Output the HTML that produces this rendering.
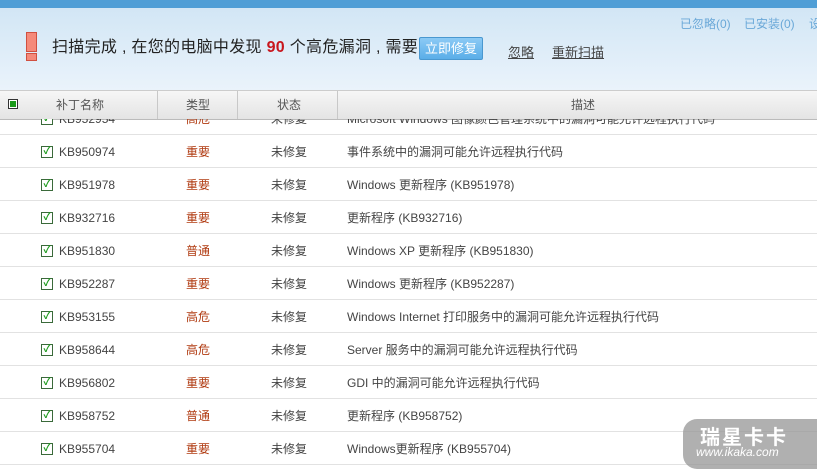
<html><head><style>
body{margin:0;width:817px;height:469px;overflow:hidden;background:#fff;font-family:"Liberation Sans","Noto Sans CJK SC",sans-serif;position:relative}
.top{position:absolute;left:0;top:0;width:817px;height:8px;background:#4f9ed6}
.hd{position:absolute;left:0;top:8px;width:817px;height:82px;background:linear-gradient(#d2e6f5,#eaf3fb)}
.th{position:absolute;left:0;top:90px;width:817px;height:28px;background:linear-gradient(#f6f6f6,#e4e4e4);border-top:1px solid #ccc;border-bottom:1px solid #bbb;font-size:12px;color:#555}
.th span{position:absolute;top:0;line-height:28px}
.dv{position:absolute;top:0;width:1px;height:28px;background:#c8c8c8}
.row{position:absolute;left:0;width:817px;height:32px;border-bottom:1px solid #e2e2e2;font-size:12px;color:#444}
.row span{position:absolute;top:1px;line-height:32px;white-space:nowrap}
.cb{position:absolute;left:41px;top:11px;width:10px;height:10px;border:1px solid #3a6a3a;background:#fff;color:#1a9a1a;font-size:10px;line-height:10px;text-align:center;font-weight:bold}
.t{color:#b03a10}
</style></head><body>
<div class="top"></div>
<div class="hd">
<div style="position:absolute;left:26px;top:24px;width:9px;height:18px;background:#f58a7a;border:1px solid #d05040"></div>
<div style="position:absolute;left:26px;top:45px;width:9px;height:6px;background:#f58a7a;border:1px solid #d05040"></div>
<div style="position:absolute;left:52px;top:29px;font-size:16px;line-height:22px;color:#222;white-space:nowrap;letter-spacing:0.3px">扫描完成 , 在您的电脑中发现 <b style="color:#c8161d">90</b> 个高危漏洞 , 需要</div>
<div style="position:absolute;left:419px;top:29px;width:62px;height:21px;background:linear-gradient(#8ccaf5,#5aaee8);border:1px solid #4a98d0;border-radius:2px;color:#fff;font-size:13px;text-align:center;line-height:21px">立即修复</div>
<div style="position:absolute;left:508px;top:34px;font-size:13px;color:#444;text-decoration:underline">忽略</div>
<div style="position:absolute;left:552px;top:34px;font-size:13px;color:#444;text-decoration:underline">重新扫描</div>
<div style="position:absolute;left:680px;top:7px;font-size:12px;color:#6aa8d8">已忽略(0)</div>
<div style="position:absolute;left:744px;top:7px;font-size:12px;color:#6aa8d8">已安装(0)</div>
<div style="position:absolute;left:809px;top:7px;font-size:12px;color:#6aa8d8">设</div>
</div>
<div class="th">
<div style="position:absolute;left:8px;top:8px;width:8px;height:8px;border:1px solid #333;background:#1a9a1a;box-shadow:inset 0 0 0 1px #fff"></div>
<span style="left:56px">补丁名称</span><div class="dv" style="left:157px"></div>
<span style="left:186px">类型</span><div class="dv" style="left:237px"></div>
<span style="left:277px">状态</span><div class="dv" style="left:337px"></div>
<span style="left:571px">描述</span>
</div>
<div style="position:absolute;left:0;top:119px;width:817px;height:15px;overflow:hidden">
<div class="row" style="top:-17px"><div class="cb">✓</div><span style="left:59px">KB952954</span><span class="t" style="left:186px">高危</span><span style="left:271px">未修复</span><span style="left:347px">Microsoft Windows 图像颜色管理系统中的漏洞可能允许远程执行代码</span></div>
</div>
<div class="row" style="top:134px;border-top:1px solid #e2e2e2"><div class="cb">✓</div><span style="left:59px">KB950974</span><span class="t" style="left:186px">重要</span><span style="left:271px">未修复</span><span style="left:347px">事件系统中的漏洞可能允许远程执行代码</span></div>
<div class="row" style="top:168px"><div class="cb">✓</div><span style="left:59px">KB951978</span><span class="t" style="left:186px">重要</span><span style="left:271px">未修复</span><span style="left:347px">Windows 更新程序 (KB951978)</span></div>
<div class="row" style="top:201px"><div class="cb">✓</div><span style="left:59px">KB932716</span><span class="t" style="left:186px">重要</span><span style="left:271px">未修复</span><span style="left:347px">更新程序 (KB932716)</span></div>
<div class="row" style="top:234px"><div class="cb">✓</div><span style="left:59px">KB951830</span><span class="t" style="left:186px">普通</span><span style="left:271px">未修复</span><span style="left:347px">Windows XP 更新程序 (KB951830)</span></div>
<div class="row" style="top:267px"><div class="cb">✓</div><span style="left:59px">KB952287</span><span class="t" style="left:186px">重要</span><span style="left:271px">未修复</span><span style="left:347px">Windows 更新程序 (KB952287)</span></div>
<div class="row" style="top:300px"><div class="cb">✓</div><span style="left:59px">KB953155</span><span class="t" style="left:186px">高危</span><span style="left:271px">未修复</span><span style="left:347px">Windows Internet 打印服务中的漏洞可能允许远程执行代码</span></div>
<div class="row" style="top:333px"><div class="cb">✓</div><span style="left:59px">KB958644</span><span class="t" style="left:186px">高危</span><span style="left:271px">未修复</span><span style="left:347px">Server 服务中的漏洞可能允许远程执行代码</span></div>
<div class="row" style="top:366px"><div class="cb">✓</div><span style="left:59px">KB956802</span><span class="t" style="left:186px">重要</span><span style="left:271px">未修复</span><span style="left:347px">GDI 中的漏洞可能允许远程执行代码</span></div>
<div class="row" style="top:399px"><div class="cb">✓</div><span style="left:59px">KB958752</span><span class="t" style="left:186px">普通</span><span style="left:271px">未修复</span><span style="left:347px">更新程序 (KB958752)</span></div>
<div class="row" style="top:432px"><div class="cb">✓</div><span style="left:59px">KB955704</span><span class="t" style="left:186px">重要</span><span style="left:271px">未修复</span><span style="left:347px">Windows更新程序 (KB955704)</span></div>
<div style="position:absolute;left:683px;top:419px;width:150px;height:50px;background:rgba(150,150,150,0.75);border-radius:14px 0 0 14px"></div>
<div style="position:absolute;left:700px;top:421px;font-size:20px;font-weight:bold;color:#fff;letter-spacing:2px">瑞星卡卡</div>
<div style="position:absolute;left:696px;top:445px;font-size:12px;color:#fff;font-style:italic">www.ikaka.com</div>
</body></html>
